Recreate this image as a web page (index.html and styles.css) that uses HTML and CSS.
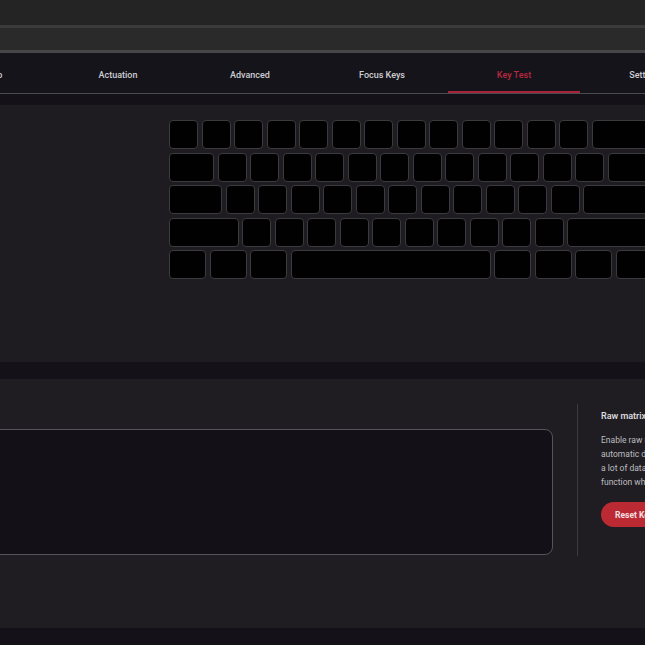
FILE: index.html
```html
<!DOCTYPE html>
<html lang="en">
<head>
<meta charset="utf-8">
<title>Key Test</title>
<link rel="stylesheet" href="styles.css">
</head>
<body>
<div class="page">
  <div class="topbar"></div>
  <div class="subbar"></div>
  <nav class="nav">
    <div class="tabs">
      <div class="tab">Keymap</div>
      <div class="tab">Actuation</div>
      <div class="tab">Advanced</div>
      <div class="tab">Focus Keys</div>
      <div class="tab active">Key Test</div>
      <div class="tab">Settings</div>
    </div>
  </nav>
  <section class="kb-panel">
    <div class="keyboard">
      <div class="row">
        <div class="key"></div><div class="key"></div><div class="key"></div><div class="key"></div><div class="key"></div><div class="key"></div><div class="key"></div><div class="key"></div><div class="key"></div><div class="key"></div><div class="key"></div><div class="key"></div><div class="key"></div><div class="key w2"></div>
      </div>
      <div class="row">
        <div class="key w15"></div><div class="key"></div><div class="key"></div><div class="key"></div><div class="key"></div><div class="key"></div><div class="key"></div><div class="key"></div><div class="key"></div><div class="key"></div><div class="key"></div><div class="key"></div><div class="key"></div><div class="key w15"></div>
      </div>
      <div class="row">
        <div class="key w175"></div><div class="key"></div><div class="key"></div><div class="key"></div><div class="key"></div><div class="key"></div><div class="key"></div><div class="key"></div><div class="key"></div><div class="key"></div><div class="key"></div><div class="key"></div><div class="key w225"></div>
      </div>
      <div class="row">
        <div class="key w225"></div><div class="key"></div><div class="key"></div><div class="key"></div><div class="key"></div><div class="key"></div><div class="key"></div><div class="key"></div><div class="key"></div><div class="key"></div><div class="key"></div><div class="key w275"></div>
      </div>
      <div class="row">
        <div class="key w125"></div><div class="key w125"></div><div class="key w125"></div><div class="key w625"></div><div class="key w125"></div><div class="key w125"></div><div class="key w125"></div><div class="key w125"></div>
      </div>
    </div>
  </section>
  <section class="test-panel">
    <div class="test-area"></div>
    <div class="divider"></div>
    <div class="info">
      <div class="info-title">Raw matrix mode</div>
      <p class="info-text">Enable raw matrix mode to bypass the<br>automatic debounce filter. This produces<br>a lot of data, so only use this<br>function when testing switches.</p>
      <button class="reset-btn">Reset Key Test</button>
    </div>
  </section>
</div>
</body>
</html>
```

FILE: styles.css
```css
* { box-sizing: border-box; }
html, body {
  margin: 0;
  padding: 0;
  width: 645px;
  height: 645px;
  overflow: hidden;
  background: #141218;
  font-family: Roboto, "Liberation Sans", sans-serif;
}
.page {
  width: 645px;
  height: 645px;
  overflow: hidden;
}
.topbar {
  height: 25px;
  background: #232423;
}
.subbar {
  height: 28px;
  background: #2a2a2a;
  border-top: 3px solid #3b3b3b;
  border-bottom: 3px solid #464646;
}
.nav {
  height: 41px;
  background: #16141b;
  border-bottom: 1px solid #4b4a4f;
  overflow: hidden;
}
.tabs {
  display: flex;
  margin-left: -80px;
  height: 40px;
}
.tab {
  flex: 0 0 132px;
  height: 40px;
  line-height: 45px;
  text-align: center;
  font-size: 9px;
  font-weight: 500;
  color: #cfced3;
  white-space: nowrap;
}
.tab.active {
  color: #b82840;
  box-shadow: inset 0 -2px 0 #a8233a;
}
.kb-panel {
  margin-top: 11px;
  height: 257px;
  background: #1e1c21;
  padding: 15px 0 0 169px;
  overflow: hidden;
}
.keyboard {
  display: flex;
  flex-direction: column;
  gap: 3.5px;
  width: 700px;
}
.row {
  display: flex;
  gap: 3.5px;
}
.key {
  --w: 1;
  flex: 0 0 auto;
  width: calc(var(--w) * 32.5px - 3.5px);
  height: 29px;
  background: #010101;
  border: 1px solid #3b3a3e;
  border-radius: 4px;
}
.w125 { --w: 1.25; }
.w15 { --w: 1.5; }
.w175 { --w: 1.75; }
.w2 { --w: 2; }
.w225 { --w: 2.25; }
.w275 { --w: 2.75; }
.w625 { --w: 6.25; }
.test-panel {
  margin-top: 17px;
  height: 249px;
  background: #1f1d21;
  display: flex;
  align-items: flex-start;
  overflow: hidden;
}
.test-area {
  flex: 0 0 auto;
  margin-left: -40px;
  margin-top: 50px;
  width: 593px;
  height: 126px;
  background: #131117;
  border: 1px solid #56555a;
  border-radius: 8px;
}
.divider {
  flex: 0 0 auto;
  margin-left: 24px;
  margin-top: 25px;
  width: 1px;
  height: 152px;
  background: #3c3a3f;
}
.info {
  flex: 0 0 auto;
  margin-left: 23px;
  margin-top: 30px;
  width: 200px;
}
.info-title {
  font-size: 9px;
  font-weight: 500;
  line-height: 14px;
  color: #e2e1e4;
  white-space: nowrap;
}
.info-text {
  margin: 10px 0 0;
  font-size: 8.5px;
  line-height: 14px;
  color: #bdbcc0;
  white-space: nowrap;
}
.reset-btn {
  margin-top: 13px;
  height: 25px;
  padding: 0 14px;
  border: none;
  border-radius: 13px;
  background: #bb2a33;
  color: #f3dfe0;
  font-family: Roboto, "Liberation Sans", sans-serif;
  font-size: 8.5px;
  font-weight: 700;
  white-space: nowrap;
}
```
